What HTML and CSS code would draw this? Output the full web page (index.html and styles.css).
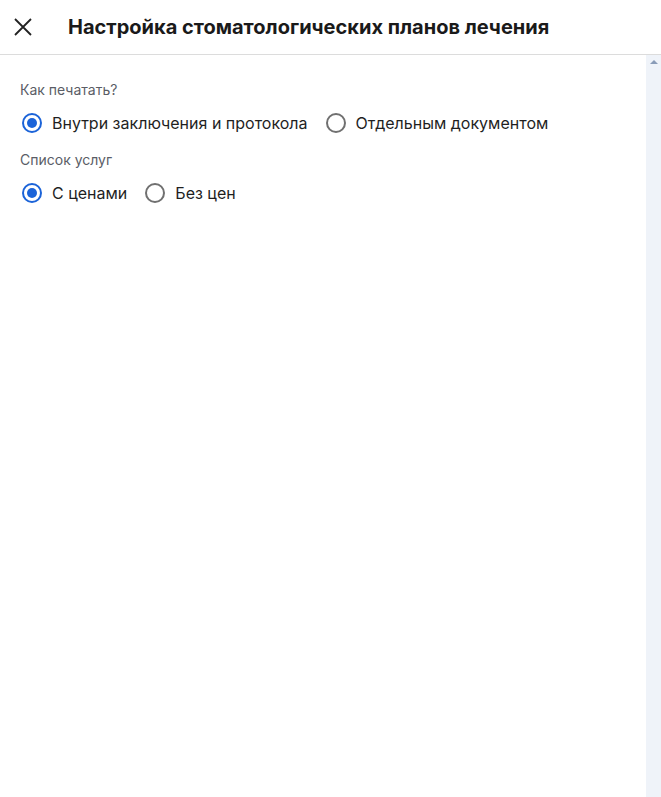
FILE: index.html
```html
<!DOCTYPE html>
<html lang="ru">
<head>
    <meta charset="UTF-8">
    <meta name="viewport" content="width=device-width, initial-scale=1.0">
    <title>Настройка стоматологических планов лечения</title>
    <link rel="stylesheet" href="styles.css">
</head>
<body>
    <header class="dialog-header">
        <button class="close-btn" aria-label="Закрыть">
            <svg width="18" height="18" viewBox="0 0 18 18">
                <path d="M1 1 L17 17 M17 1 L1 17" stroke="#222" stroke-width="1.8" fill="none"/>
            </svg>
        </button>
        <h1 class="dialog-title">Настройка стоматологических планов лечения</h1>
    </header>
    <div class="dialog-body">
        <div class="content">
            <div class="field">
                <div class="field-label">Как печатать?</div>
                <div class="radio-group">
                    <label class="radio checked"><span class="radio-mark"></span>Внутри заключения и протокола</label>
                    <label class="radio"><span class="radio-mark"></span>Отдельным документом</label>
                </div>
            </div>
            <div class="field">
                <div class="field-label">Список услуг</div>
                <div class="radio-group">
                    <label class="radio checked"><span class="radio-mark"></span>С ценами</label>
                    <label class="radio"><span class="radio-mark"></span>Без цен</label>
                </div>
            </div>
        </div>
        <div class="scrollbar">
            <span class="scroll-arrow"></span>
        </div>
    </div>
</body>
</html>
```

FILE: styles.css
```css
body {
    font-family: Inter, "Noto Sans", sans-serif;
    margin: 0;
    padding: 0;
    background-color: #fff;
    color: #1f1f1f;
    height: 797px;
    display: flex;
    flex-direction: column;
    overflow: hidden;
}
.dialog-header {
    display: flex;
    align-items: center;
    height: 53px;
    border-bottom: 1px solid #dcdcdc;
    padding: 0 0 1px 14px;
    box-sizing: content-box;
}
.close-btn {
    background: none;
    border: none;
    padding: 0;
    width: 18px;
    height: 18px;
    display: flex;
    cursor: pointer;
}
.dialog-title {
    margin: 0 0 0 36px;
    font-size: 20px;
    font-weight: 700;
    color: #1a1a1a;
}
.dialog-body {
    flex: 1;
    display: flex;
}
.content {
    flex: 1;
    padding: 26px 20px 0 20px;
}
.field {
    margin-bottom: 18px;
}
.field-label {
    font-size: 14px;
    color: #5a5d66;
    line-height: 17px;
}
.radio-group {
    display: flex;
    gap: 18px;
    margin-top: 15px;
}
.radio {
    display: flex;
    align-items: center;
    gap: 10px;
    font-size: 16px;
    line-height: 20px;
    color: #1f1f1f;
    padding-left: 2px;
    cursor: pointer;
}
.radio + .radio {
    padding-left: 0;
}
.radio-mark {
    width: 16px;
    height: 16px;
    border: 2px solid #707070;
    border-radius: 50%;
    display: flex;
    align-items: center;
    justify-content: center;
}
.radio.checked .radio-mark {
    border-color: #1b63d8;
}
.radio.checked .radio-mark::after {
    content: "";
    width: 10px;
    height: 10px;
    border-radius: 50%;
    background-color: #1b63d8;
}
.scrollbar {
    width: 15px;
    background-color: #eff3f9;
    position: relative;
}
.scroll-arrow {
    position: absolute;
    top: 5px;
    left: 4px;
    width: 0;
    height: 0;
    border-left: 4px solid transparent;
    border-right: 4px solid transparent;
    border-bottom: 4px solid #8a9cb8;
}
```
